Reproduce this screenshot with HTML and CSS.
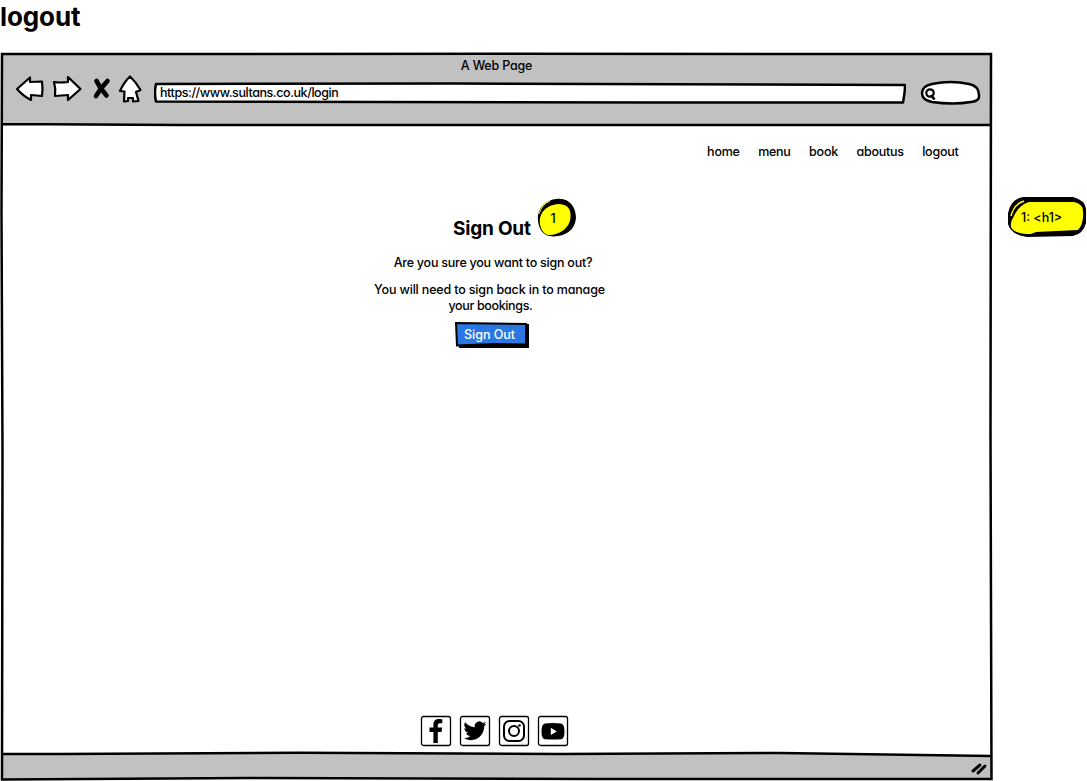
FILE: index.html
```html
<!DOCTYPE html>
<html lang="en">
<head>
<meta charset="utf-8">
<title>logout</title>
<link rel="stylesheet" href="styles.css">
</head>
<body>
<h1 class="board-title">logout</h1>
<div class="board">
  <section class="browser">
    <svg class="frame" viewBox="0 0 993 729" aria-hidden="true">
      <path fill="#c1c1c1" d="M2 2H991V73H2zM2 702L300 701L800 702L991 704V726L2 727z"/>
      <path class="ink" d="M2 2L500 1.8L991 2L990.5 380L991.5 727L600 727L250 726L2 727.5L2.5 400L1.5 160ZM2 72L180 73L991 73M2 702L60 702L300 700.8L560 702L780 701L991 704"/>
      <path class="thick" d="M973 719L980 713M978 721L985 714"/>
    </svg>
    <header class="chrome">
      <div class="page-name">A Web Page</div>
      <div class="toolbar">
        <svg class="controls" viewBox="0 0 130 32" aria-hidden="true">
          <g class="shape">
            <path d="M2 17L15 5.500V10L27 9.500Q28 17 27 24L16 23V28Q8 24 2 17Z"/>
            <path d="M39 10Q45 11 53 10V5L65.500 17L53 28V23L40 24Q41 17 39 10Z"/>
            <path d="M115 4.500Q121 10 125.500 18L121 20L123.500 29L118 29.500V26H113V29L109 29.500L109.500 19.500L105 19Q109 10 115 4.500Z"/>
          </g>
          <path class="cross" d="M81.500 9L85.500 16L91.500 23.500M92.500 9L86 16.500L81 24"/>
        </svg>
        <div class="address">
          <svg class="outline" viewBox="0 0 752 22" aria-hidden="true"><path class="field" d="M2 2L300 1.500L751 3Q751 10 749 20.500L500 20.500L2 19.500Q0 11 2 2Z"/></svg>
          <span class="url">https://www.sultans.co.uk/login</span>
        </div>
        <svg class="search" viewBox="0 0 62 26" aria-hidden="true">
          <path class="field" d="M12 4Q31 0 49 4Q59 6 59 15Q60 21 51 22Q33 25 12 22Q2 20 2 13Q2 6 12 4Z"/>
          <circle cx="10" cy="13" r="3.700" fill="none" stroke="#000" stroke-width="2.200"/>
          <path d="M11 15L14.500 19.500" fill="none" stroke="#000" stroke-width="2.700"/>
        </svg>
      </div>
    </header>
    <nav class="nav"><a class="home">home</a><a class="menu">menu</a><a class="book">book</a><a class="about">aboutus</a><a class="out">logout</a></nav>
    <main class="content">
      <h2 class="heading">Sign Out
        <span class="badge"><svg viewBox="0 0 40 40" aria-hidden="true"><path d="M19 1C32-1 39 9 39 20C38 34 25 40 12 38C3 36 0 25 1 17C3 8 10 2 19 1Z"/><path fill="#ff0" d="M16 7C24 4 33.500 7 33.500 16C34.500 29 24 37 11 37C4 35 2 26 3 20C5 13 9 9 16 7Z"/><path fill="none" stroke="#ff0" d="M2 16Q5 6 13 3"/></svg><span class="badge-no">1</span></span>
      </h2>
      <p class="question">Are you sure you want to sign out?</p>
      <p class="warning"><span class="w1">You will need to sign back in to manage</span><br><span class="w2">your bookings.</span></p>
      <button class="button">
        <svg class="outline" viewBox="0 0 76 28" aria-hidden="true"><path d="M3 3H75V27H5Z"/><path fill="#2a77e4" stroke="#000" stroke-width="2" d="M2 2L72 3V23.500L40 23L3 24.500Z"/></svg>
        <span class="label">Sign Out</span>
      </button>
    </main>
    <footer class="social">
      <svg viewBox="0 0 32 32"><rect class="tile" x="1.500" y="1.500" width="29" height="29" rx="2"/><path d="M13.400 28V17H9.500V12.500H13.400V9.500C13.400 5.800 15.600 4 19 4Q21 4 22.300 4.300V8.200H20C18.200 8.200 17.800 9.200 17.800 10.500V12.500H22.200L21.500 17H17.800V28Z"/></svg>
      <svg viewBox="0 0 32 32"><rect class="tile" x="1.500" y="1.500" width="29" height="29" rx="2"/><path transform="translate(4.500 4.300) scale(.96)" d="M23.950 4.570a10 10 0 0 1-2.820.77 4.960 4.960 0 0 0 2.160-2.720 9.900 9.900 0 0 1-3.130 1.200 4.920 4.920 0 0 0-8.380 4.480A13.930 13.930 0 0 1 1.640 3.160a4.920 4.920 0 0 0 1.520 6.570 4.900 4.900 0 0 1-2.230-.61v.06a4.920 4.920 0 0 0 3.950 4.830 5 5 0 0 1-2.210.08 4.940 4.940 0 0 0 4.600 3.420A9.870 9.870 0 0 1 0 19.540a13.990 13.990 0 0 0 7.550 2.210c9.050 0 14-7.500 14-13.980 0-.21 0-.42-.02-.63a9.940 9.940 0 0 0 2.420-2.570Z"/></svg>
      <svg viewBox="0 0 32 32"><rect class="tile" x="1.500" y="1.500" width="29" height="29" rx="2"/><g fill="none" stroke="#000" stroke-width="2"><rect x="6" y="6" width="20" height="20" rx="5.500"/><circle cx="16" cy="16" r="5"/></g><circle cx="21.500" cy="10.500" r="1.300"/></svg>
      <svg viewBox="0 0 32 32"><rect class="tile" x="1.500" y="1.500" width="29" height="29" rx="2"/><path d="M8 8.500Q16 7.500 24 8.500Q27.500 9 27.500 16.500Q27.500 24 24 24.200Q16 25 8 24.200Q4.500 24 4.500 16.500Q4.500 9 8 8.500Z"/><path fill="#fff" d="M13.800 12.800V20L19.800 16.400Z"/></svg>
    </footer>
  </section>
  <aside class="note">
    <svg class="outline" viewBox="0 0 80 42" aria-hidden="true"><path d="M16 1L66 1Q78 4 79 13L79 27Q76 38 66 40L20 41Q4 39 1 28L1 17Q4 3 16 1Z"/><path fill="#ff0" d="M22 6L67 6Q76 8 76 15Q77 28 71 34L29 36L24 38Q7 38 4 31Q3 26 7 20Q12 9 22 6Z"/><path fill="none" stroke="#ff0" stroke-width="1.500" d="M4 20Q7 8 17 5"/></svg>
    <span class="note-text">1: &lt;h1&gt;</span>
  </aside>
</div>
</body>
</html>
```
FILE: styles.css
```css
* { box-sizing: border-box; }
body {
  margin: 0;
  background: #fff;
  color: #000;
  font: 500 12.5px/16px Inter, "Liberation Sans", sans-serif;
  font-feature-settings: "cv11";
  white-space: nowrap;
  overflow: hidden;
}
svg { display: block; }
h1, h2, p { margin: 0; }
.board-title { height: 52px; font-size: 26px; line-height: 33px; font-weight: 700; letter-spacing: -0.1px; }
.board { display: flex; align-items: flex-start; }
.browser {
  position: relative;
  flex: none;
  width: 993px;
  height: 729px;
  display: flex;
  flex-direction: column;
}
.frame, .outline { position: absolute; left: 0; top: 0; width: 100%; height: 100%; }
.ink { fill: none; stroke: #000; stroke-width: 2.5; }
.thick { fill: none; stroke: #000; stroke-width: 3; stroke-linecap: round; }
.chrome { position: relative; height: 74px; padding-top: 6px; }
.page-name { text-align: center; letter-spacing: -0.2px; }
.toolbar { display: flex; align-items: flex-start; padding-left: 15px; }
.controls { width: 130px; height: 32px; margin-top: -2px; }
.shape { fill: #fff; stroke: #000; stroke-width: 2.2; stroke-linejoin: round; }
.cross { fill: none; stroke: #000; stroke-width: 4.6; stroke-linecap: round; }
.address { position: relative; width: 752px; height: 22px; margin: 8px 0 0 9px; padding: 3px 6px; }
.url { position: relative; display: block; letter-spacing: -0.42px; }
.field { fill: #fff; stroke: #000; stroke-width: 2.5; stroke-linejoin: round; }
.search { width: 62px; height: 26px; margin: 6px 0 0 14px; }
.nav { position: relative; display: flex; justify-content: flex-end; gap: 18.5px; padding: 18px 34.5px 0 0; letter-spacing: -0.25px; }
.content { position: relative; flex: 1; display: flex; flex-direction: column; align-items: center; width: 979px; padding-top: 55px; }
.heading { position: relative; width: 78px; margin-left: 5px; font-size: 19px; line-height: 28px; font-weight: 700; letter-spacing: -0.2px; }
.badge { position: absolute; left: 84px; top: -17px; width: 40px; height: 40px; font-size: 12.5px; line-height: 40px; font-weight: 500; letter-spacing: 0; }
.badge-no { position: absolute; left: 13.5px; top: 1px; }
.question { margin: 12px 0 0 7px; letter-spacing: -0.24px; }
.warning { margin-top: 11px; text-align: center; letter-spacing: -0.16px; }
.w2 { padding-left: 2px; letter-spacing: -0.35px; }
.button {
  position: relative;
  width: 76px;
  height: 28px;
  margin: 7px 0 0 4px;
  padding: 0 4px 1px 0;
  border: 0;
  background: none;
  color: #fff;
  font: inherit;
  font-feature-settings: inherit;
}
.label { position: relative; }
.social { position: relative; display: flex; gap: 7px; padding: 0 0 34px 420px; }
.social svg { width: 32px; height: 32px; }
.tile { fill: #fff; stroke: #000; stroke-width: 1.3; }
.note { position: relative; flex: none; width: 80px; height: 42px; margin: 144px 0 0 14px; padding: 14px 0 0 14px; }
.note-text { position: relative; display: block; }
```
